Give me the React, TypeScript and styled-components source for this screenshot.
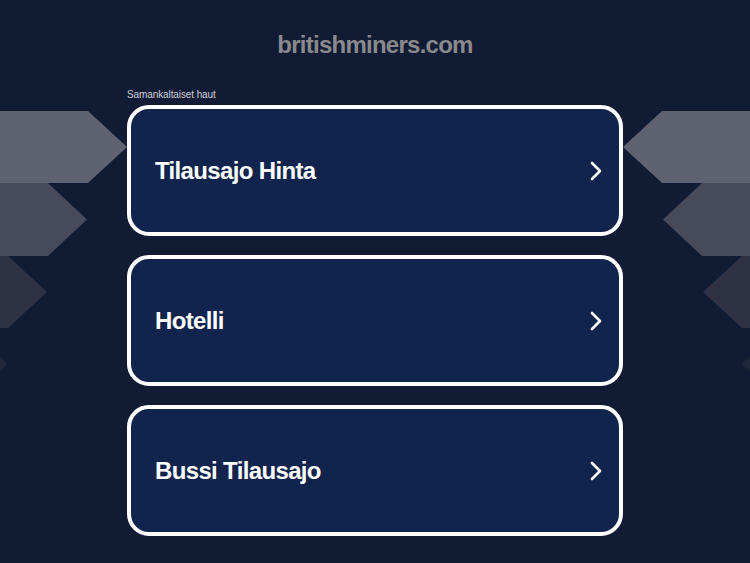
import React from "react";
import styled, { createGlobalStyle } from "styled-components";

const GlobalStyle = createGlobalStyle`
  html, body {
    margin: 0;
    padding: 0;
    background: #111b34;
  }
  * { box-sizing: border-box; }
`;

const Page = styled.div`
  position: relative;
  min-height: 100vh;
  overflow: hidden;
  background: #111b34;
  font-family: "Liberation Sans", Arial, sans-serif;
  display: flex;
  flex-direction: column;
  align-items: center;
`;

const Decor = styled.svg<{ $side: "left" | "right" }>`
  position: absolute;
  top: 0;
  ${(p) => (p.$side === "left" ? "left: 0;" : "right: 0;")}
  width: 130px;
  height: 420px;
  pointer-events: none;
`;

const Title = styled.h1`
  position: relative;
  margin: 33px 0 0;
  font-size: 24px;
  line-height: 24px;
  font-weight: 700;
  letter-spacing: -0.75px;
  color: #8a8a8e;
`;

const Column = styled.main`
  position: relative;
  width: 496px;
  margin-top: 33px;
  display: flex;
  flex-direction: column;
`;

const Label = styled.div`
  font-size: 10px;
  line-height: 10px;
  color: #c9ccd4;
  letter-spacing: -0.1px;
  margin-bottom: 5px;
`;

const List = styled.div`
  display: flex;
  flex-direction: column;
  gap: 19px;
`;

const Card = styled.a`
  display: flex;
  align-items: center;
  justify-content: space-between;
  height: 131px;
  padding: 1px 17px 0 24px;
  border: 4px solid #ffffff;
  border-radius: 22px;
  background: #11244d;
  text-decoration: none;
  cursor: pointer;
`;

const CardText = styled.span`
  font-size: 24px;
  font-weight: 700;
  letter-spacing: -0.65px;
  color: #ffffff;
  line-height: 1;
`;

const Chevron = () => (
  <svg width="12" height="20" viewBox="0 0 12 20" fill="none">
    <path
      d="M2 2 L10 10 L2 18"
      stroke="#ffffff"
      strokeWidth="2.6"
      strokeLinecap="round"
      strokeLinejoin="round"
    />
  </svg>
);

const items = ["Tilausajo Hinta", "Hotelli", "Bussi Tilausajo"];

export default function App() {
  return (
    <>
      <GlobalStyle />
      <Page>
        <Decor $side="left" viewBox="0 0 130 420">
          <polygon points="0,111 88,111 127,147 88,183 0,183" fill="#5f6271" />
          <polygon points="0,183 48,183 87,219.5 48,256 0,256" fill="#474a5b" />
          <polygon points="0,256 8,256 47,292 8,328 0,328" fill="#2e3244" />
          <polygon points="-32,328 8,364 -32,400" fill="#22283b" />
        </Decor>
        <Decor $side="right" viewBox="0 0 130 420">
          <polygon points="130,111 42,111 3,147 42,183 130,183" fill="#5f6271" />
          <polygon points="130,183 82,183 43,219.5 82,256 130,256" fill="#474a5b" />
          <polygon points="130,256 122,256 83,292 122,328 130,328" fill="#2e3244" />
          <polygon points="162,328 122,364 162,400" fill="#22283b" />
        </Decor>
        <Title>britishminers.com</Title>
        <Column>
          <Label>Samankaltaiset haut</Label>
          <List>
            {items.map((t) => (
              <Card key={t}>
                <CardText>{t}</CardText>
                <Chevron />
              </Card>
            ))}
          </List>
        </Column>
      </Page>
    </>
  );
}
